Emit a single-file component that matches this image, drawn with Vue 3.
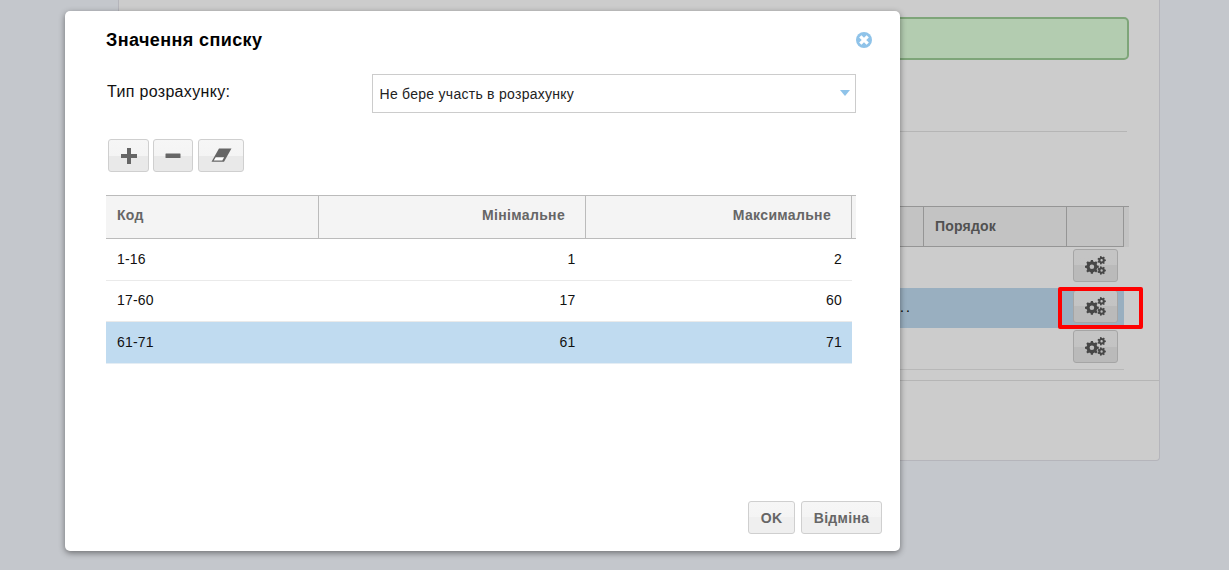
<script setup>
const gearPath = (cx, cy, outer, inner, hole, teeth) => {
  const pts = []
  const step = (Math.PI * 2) / teeth
  for (let i = 0; i < teeth; i++) {
    const a = i * step
    const w = step * 0.24
    const seq = [[inner, a - step * 0.3], [outer, a - w * 0.8], [outer, a + w * 0.8], [inner, a + step * 0.3]]
    for (const [r, t] of seq) pts.push(`${(cx + r * Math.cos(t)).toFixed(2)} ${(cy + r * Math.sin(t)).toFixed(2)}`)
  }
  const ring = `M${pts.join('L')}Z`
  const h = `M${cx - hole} ${cy}a${hole} ${hole} 0 1 0 ${hole * 2} 0a${hole} ${hole} 0 1 0 ${-hole * 2} 0Z`
  return ring + h
}
const gears = gearPath(6.9, 10.8, 7, 5.5, 2.3, 8) + gearPath(16.6, 4.3, 4.3, 3.3, 1.2, 7) + gearPath(16.6, 14.5, 4.3, 3.3, 1.2, 7)

const rows = [
  { code: '1-16', min: 1, max: 2 },
  { code: '17-60', min: 17, max: 60 },
  { code: '61-71', min: 61, max: 71, selected: true }
]
const backRows = [{ text: '' }, { text: '..', selected: true }, { text: '' }]
</script>

<template>
  <div class="page">
    <section class="panel">
      <div class="panel-main">
        <div class="alert"></div>
        <hr class="rule" />
        <div class="grid-head">
          <div class="gh gh-fill"></div>
          <div class="gh gh-order">Порядок</div>
          <div class="gh gh-action"></div>
          <div class="gh-scroll"></div>
        </div>
        <div class="grid-body">
          <div v-for="(r, i) in backRows" :key="i" class="grow" :class="{ selected: r.selected }">
            <span class="dots">{{ r.text }}</span>
            <button class="btn gear-btn" type="button" aria-label="Налаштування">
              <svg width="21" height="19" viewBox="0 0 21 19"><path :d="gears" fill="#585858" fill-rule="evenodd" /></svg>
            </button>
          </div>
        </div>
      </div>
      <div class="panel-foot"></div>
    </section>

    <div class="overlay"></div>
    <div class="marker"></div>

    <div class="modal">
      <header class="modal-head">
        <h2 class="title">Значення списку</h2>
        <svg class="close" width="16" height="16" viewBox="0 0 16 16">
          <circle cx="8" cy="8" r="8" fill="#8fc3e9" />
          <path d="M4.3 4.3l7.4 7.4M11.7 4.3l-7.4 7.4" stroke="#fff" stroke-width="3.2" stroke-linecap="butt" />
        </svg>
      </header>

      <div class="field">
        <label class="field-label">Тип розрахунку:</label>
        <div class="select">
          <span>Не бере участь в розрахунку</span>
          <i class="caret"></i>
        </div>
      </div>

      <div class="toolbar">
        <button class="btn tool tool-add" type="button" aria-label="Додати">
          <svg width="16" height="16" viewBox="0 0 16 16"><path d="M6 0h4v6h6v4h-6v6H6v-6H0V6h6z" fill="#666" /></svg>
        </button>
        <button class="btn tool tool-del" type="button" aria-label="Видалити">
          <svg width="16" height="16" viewBox="0 0 16 16"><rect x="0.5" y="5.5" width="15" height="4.5" rx="0.5" fill="#666" /></svg>
        </button>
        <button class="btn tool tool-erase" type="button" aria-label="Очистити">
          <svg width="21" height="15" viewBox="0 0 21 15">
            <path d="M8 .5H20.5L13 13.8H.5z" fill="#666" />
            <path d="M4.7 9.2H13.1L11.3 12.5H2.7z" fill="#fff" />
          </svg>
        </button>
      </div>

      <div class="table">
        <div class="thead">
          <div class="th th-code">Код</div>
          <div class="th th-num th-min">Мінімальне</div>
          <div class="th th-num th-max">Максимальне</div>
        </div>
        <div v-for="r in rows" :key="r.code" class="tr" :class="{ selected: r.selected }">
          <div class="td td-code">{{ r.code }}</div>
          <div class="td td-num td-min">{{ r.min }}</div>
          <div class="td td-num td-max">{{ r.max }}</div>
        </div>
      </div>

      <footer class="modal-foot">
        <button class="btn action action-ok" type="button">OK</button>
        <button class="btn action action-cancel" type="button">Відміна</button>
      </footer>
    </div>
  </div>
</template>

<style>
html, body { margin: 0; overflow: hidden; }
</style>

<style scoped>
.page {
  position: relative;
  width: 1229px;
  height: 570px;
  overflow: hidden;
  background: #f5f9ff;
  font-family: "Liberation Sans", Arial, sans-serif;
  color: #000;
}
.btn {
  box-sizing: border-box;
  padding: 0;
  border: 1px solid #cfcfcf;
  border-radius: 3px;
  background: linear-gradient(#f6f6f6 0, #f4f4f4 50%, #e9e9e9 50%, #e9e9e9 100%);
  display: flex;
  align-items: center;
  justify-content: center;
  font-family: inherit;
}
/* background page */
.panel {
  box-sizing: border-box;
  margin-left: 118px;
  width: 1042px;
  height: 461px;
  background: #fff;
  border: 1px solid #e3e3ea;
  border-top: 0;
  border-radius: 0 0 4px 4px;
  display: flex;
  flex-direction: column;
}
.panel-main {
  box-sizing: border-box;
  height: 380px;
  padding: 17px 30px 0 20px;
}
.alert {
  box-sizing: border-box;
  height: 43px;
  background: #e0ffdc;
  border: 2px solid #9ecf98;
  border-radius: 5px;
}
.rule {
  margin: 71px 2px 0 0;
  border: 0;
  border-top: 1px solid #e3e3e3;
}
.grid-head {
  display: flex;
  margin-top: 74px;
  height: 41px;
  background: #f4f4f4;
  border-top: 1px solid #bbb;
  box-sizing: border-box;
}
.gh {
  box-sizing: border-box;
  border-bottom: 1px solid #bbb;
  border-right: 1px solid #bbb;
}
.gh-fill { flex: 1; }
.gh-order {
  width: 143px;
  padding: 11px 0 0 11px;
  font-size: 14px;
  font-weight: 700;
  letter-spacing: 0.2px;
  color: #666;
}
.gh-action { width: 57px; }
.gh-scroll { width: 5px; }
.grid-body { margin-right: 5px; border-bottom: 1px solid #e6e6e6; }
.grow {
  height: 40.67px;
  box-sizing: border-box;
  display: flex;
  align-items: flex-start;
  justify-content: flex-end;
  padding: 2px 6px 0 0;
  position: relative;
}
.grow.selected { background: #c0dbf0; }
.dots {
  position: absolute;
  left: 0;
  top: 11px;
  font-size: 14px;
  letter-spacing: 2px;
  margin-left: 761px;
}
.gear-btn { width: 45px; height: 33px; }
.panel-foot {
  flex: 1;
  border-top: 1px solid #e3e3e3;
}
.overlay {
  position: absolute;
  inset: 0;
  background: rgba(0, 0, 0, 0.2);
}
.marker {
  position: absolute;
  left: 1058px;
  top: 287px;
  width: 85px;
  height: 42px;
  box-sizing: border-box;
  border: 4px solid #fe0000;
  border-radius: 2px;
}
/* modal */
.modal {
  position: absolute;
  left: 65px;
  top: 11px;
  width: 835px;
  height: 540px;
  box-sizing: border-box;
  padding: 0 44px 0 41px;
  background: #fff;
  border-radius: 5px;
  box-shadow: 0 2px 6px rgba(0, 0, 0, 0.45);
  display: flex;
  flex-direction: column;
}
.modal-head {
  position: relative;
  height: 63px;
}
.title {
  margin: 0;
  padding-top: 19px;
  font-size: 18px;
  line-height: 21px;
  font-weight: 700;
  letter-spacing: 0.4px;
}
.close {
  position: absolute;
  right: -16px;
  top: 21px;
}
.field {
  display: flex;
  height: 39px;
}
.field-label {
  width: 266px;
  padding: 9px 0 0 1px;
  box-sizing: border-box;
  font-size: 16px;
  line-height: 18px;
  letter-spacing: 0.33px;
  color: #111;
}
.select {
  flex: 1;
  box-sizing: border-box;
  position: relative;
  border: 1px solid #ccc;
  padding: 11px 0 0 6.5px;
  font-size: 14px;
  line-height: 16px;
  letter-spacing: 0.27px;
  color: #222;
}
.caret {
  position: absolute;
  right: 5px;
  top: 15px;
  width: 0;
  height: 0;
  border-left: 5px solid transparent;
  border-right: 5px solid transparent;
  border-top: 6px solid #8fc3e9;
}
.toolbar {
  display: flex;
  margin-top: 26px;
  padding-left: 2px;
  height: 33px;
}
.tool { height: 33px; }
.tool-add { width: 41px; }
.tool-del { width: 40px; margin-left: 4px; }
.tool-erase { width: 46px; margin-left: 5px; }
.table { margin-top: 23px; }
.thead {
  display: flex;
  height: 44px;
  box-sizing: border-box;
  background: #f4f4f4;
  border-top: 1px solid #bbb;
  border-bottom: 1px solid #bbb;
  font-size: 14px;
  font-weight: 700;
  letter-spacing: 0.33px;
  color: #666;
}
.th {
  box-sizing: border-box;
  padding-top: 11px;
  line-height: 17px;
  border-right: 1px solid #bbb;
}
.th-code { width: 213px; padding-left: 11px; }
.th-min { width: 267px; }
.th-max { width: 266px; }
.th-num { text-align: right; padding-right: 20px; }
.tr {
  display: flex;
  width: 746px;
  height: 42px;
  box-sizing: border-box;
  border-bottom: 1px solid #eaeaea;
  font-size: 14px;
  line-height: 40px;
  letter-spacing: 0.2px;
  color: #111;
}
.tr:nth-child(3) { height: 41px; line-height: 38px; }
.tr.selected { height: 41.5px; background: #c0dbf0; border-bottom-color: #e4edf4; }
.td { box-sizing: border-box; }
.td-code { width: 213px; padding-left: 11px; }
.td-min { width: 267px; }
.td-max { width: 266px; }
.td-num { text-align: right; padding-right: 10px; }
.td-min { padding-right: 10.5px; }
.modal-foot {
  margin-top: auto;
  display: flex;
  justify-content: flex-end;
  gap: 6px;
  padding-bottom: 17px;
  margin-right: -26px;
}
.action {
  height: 33px;
  font-size: 14px;
  font-weight: 700;
  letter-spacing: 0.3px;
  color: #666;
  background: linear-gradient(#f6f6f6 0, #f4f4f4 50%, #efefef 50%, #efefef 100%);
}
.action-ok { width: 47px; }
.action-cancel { width: 81px; }
</style>
